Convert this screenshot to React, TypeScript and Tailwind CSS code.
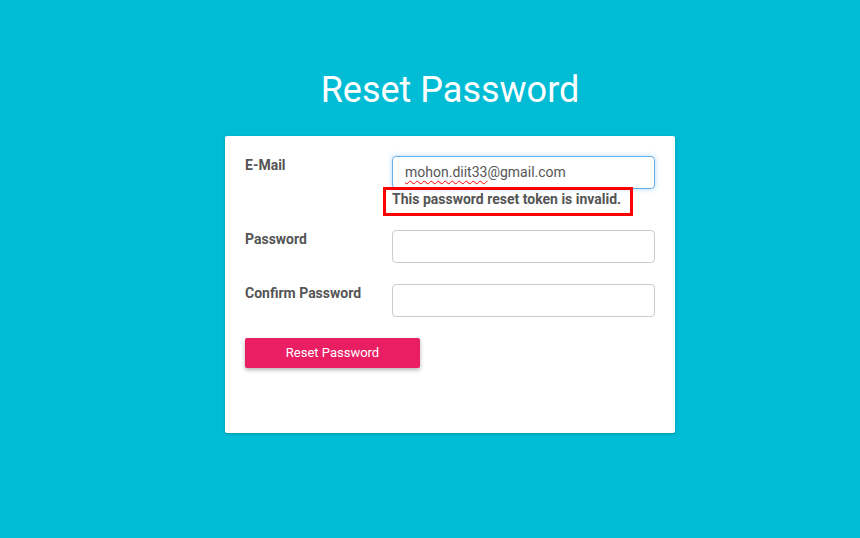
export default function App() {
  return (
    <div
      className="min-h-[538px] w-full bg-[#00bcd4] pl-10"
      style={{ fontFamily: 'Roboto, "Liberation Sans", sans-serif' }}
    >
      <div className="mx-auto w-[450px] pt-[66px]">
        <h1 className="text-center text-[36px] leading-[48px] font-normal text-white">
          Reset Password
        </h1>
        <div className="mt-[22px] h-[297px] rounded-[2px] bg-white px-5 pt-5 shadow-[0_1px_3px_rgba(0,0,0,0.2)]">
          <FormRow label="E-Mail">
            <div className="h-[33px] rounded-[4px] border border-[#66afe9] px-3 text-[14px] leading-[31px] text-[#555] shadow-[0_0_5px_rgba(102,175,233,0.5)]">
              <span className="underline decoration-wavy decoration-[#ff0000] decoration-1 underline-offset-[3px]">
                mohon.diit33
              </span>
              @gmail.com
            </div>
            <div className="relative">
              <p className="text-[14px] leading-5 font-bold text-[#555]">
                This password reset token is invalid.
              </p>
              <div className="pointer-events-none absolute -top-[2px] -left-[9px] h-[29px] w-[250px] border-[3px] border-[#ff0000]" />
            </div>
          </FormRow>

          <div className="mt-[21px]">
            <FormRow label="Password">
              <div className="h-[33px] rounded-[4px] border border-[#ccc]" />
            </FormRow>
          </div>

          <div className="mt-[21px]">
            <FormRow label="Confirm Password">
              <div className="h-[33px] rounded-[4px] border border-[#ccc]" />
            </FormRow>
          </div>

          <button className="mt-[21px] h-[30px] w-[175px] rounded-[2px] bg-[#e91e63] text-[13px] text-white shadow-[0_2px_4px_rgba(0,0,0,0.3)]">
            Reset Password
          </button>
        </div>
      </div>
    </div>
  );
}

function FormRow({ label, children }: { label: string; children: React.ReactNode }) {
  return (
    <div className="flex">
      <label className="-mt-px w-[147px] shrink-0 text-[14px] leading-5 font-bold text-[#555]">
        {label}
      </label>
      <div className="flex-1">{children}</div>
    </div>
  );
}
